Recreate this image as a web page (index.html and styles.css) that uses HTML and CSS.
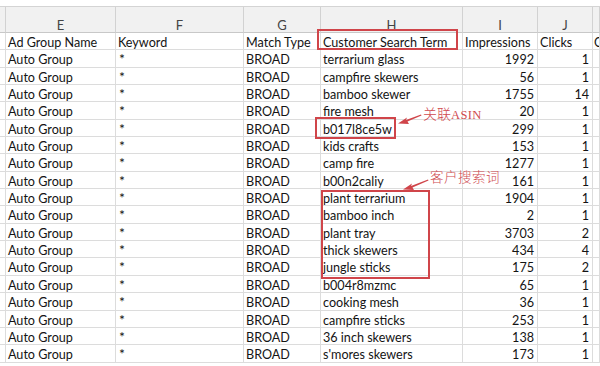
FILE: index.html
```html
<!DOCTYPE html>
<html>
<head>
<meta charset="utf-8">
<link rel="stylesheet" href="styles.css">
</head>
<body>
<div class="sheet">
  <div class="topgap"></div>
  <div class="row colhdr">
    <div class="c"></div><div class="c ctr">E</div><div class="c ctr">F</div><div class="c ctr">G</div><div class="c ctr">H</div><div class="c ctr">I</div><div class="c ctr">J</div><div class="c"></div>
  </div>
  <div class="row">
    <div class="c"></div><div class="c">Ad Group Name</div><div class="c">Keyword</div><div class="c">Match Type</div><div class="c">Customer Search Term</div><div class="c">Impressions</div><div class="c">Clicks</div><div class="c edge">C</div>
  </div>
  <div class="row"><div class="c"></div><div class="c">Auto Group</div><div class="c ast">*</div><div class="c">BROAD</div><div class="c">terrarium glass</div><div class="c num">1992</div><div class="c num">1</div><div class="c"></div></div>
  <div class="row"><div class="c"></div><div class="c">Auto Group</div><div class="c ast">*</div><div class="c">BROAD</div><div class="c">campfire skewers</div><div class="c num">56</div><div class="c num">1</div><div class="c"></div></div>
  <div class="row"><div class="c"></div><div class="c">Auto Group</div><div class="c ast">*</div><div class="c">BROAD</div><div class="c">bamboo skewer</div><div class="c num">1755</div><div class="c num">14</div><div class="c"></div></div>
  <div class="row"><div class="c"></div><div class="c">Auto Group</div><div class="c ast">*</div><div class="c">BROAD</div><div class="c">fire mesh</div><div class="c num">20</div><div class="c num">1</div><div class="c"></div></div>
  <div class="row"><div class="c"></div><div class="c">Auto Group</div><div class="c ast">*</div><div class="c">BROAD</div><div class="c">b017l8ce5w</div><div class="c num">299</div><div class="c num">1</div><div class="c"></div></div>
  <div class="row"><div class="c"></div><div class="c">Auto Group</div><div class="c ast">*</div><div class="c">BROAD</div><div class="c">kids crafts</div><div class="c num">153</div><div class="c num">1</div><div class="c"></div></div>
  <div class="row"><div class="c"></div><div class="c">Auto Group</div><div class="c ast">*</div><div class="c">BROAD</div><div class="c">camp fire</div><div class="c num">1277</div><div class="c num">1</div><div class="c"></div></div>
  <div class="row"><div class="c"></div><div class="c">Auto Group</div><div class="c ast">*</div><div class="c">BROAD</div><div class="c">b00n2caliy</div><div class="c num">161</div><div class="c num">1</div><div class="c"></div></div>
  <div class="row"><div class="c"></div><div class="c">Auto Group</div><div class="c ast">*</div><div class="c">BROAD</div><div class="c">plant terrarium</div><div class="c num">1904</div><div class="c num">1</div><div class="c"></div></div>
  <div class="row"><div class="c"></div><div class="c">Auto Group</div><div class="c ast">*</div><div class="c">BROAD</div><div class="c">bamboo inch</div><div class="c num">2</div><div class="c num">1</div><div class="c"></div></div>
  <div class="row"><div class="c"></div><div class="c">Auto Group</div><div class="c ast">*</div><div class="c">BROAD</div><div class="c">plant tray</div><div class="c num">3703</div><div class="c num">2</div><div class="c"></div></div>
  <div class="row"><div class="c"></div><div class="c">Auto Group</div><div class="c ast">*</div><div class="c">BROAD</div><div class="c">thick skewers</div><div class="c num">434</div><div class="c num">4</div><div class="c"></div></div>
  <div class="row"><div class="c"></div><div class="c">Auto Group</div><div class="c ast">*</div><div class="c">BROAD</div><div class="c">jungle sticks</div><div class="c num">175</div><div class="c num">2</div><div class="c"></div></div>
  <div class="row"><div class="c"></div><div class="c">Auto Group</div><div class="c ast">*</div><div class="c">BROAD</div><div class="c">b004r8mzmc</div><div class="c num">65</div><div class="c num">1</div><div class="c"></div></div>
  <div class="row"><div class="c"></div><div class="c">Auto Group</div><div class="c ast">*</div><div class="c">BROAD</div><div class="c">cooking mesh</div><div class="c num">36</div><div class="c num">1</div><div class="c"></div></div>
  <div class="row"><div class="c"></div><div class="c">Auto Group</div><div class="c ast">*</div><div class="c">BROAD</div><div class="c">campfire sticks</div><div class="c num">253</div><div class="c num">1</div><div class="c"></div></div>
  <div class="row"><div class="c"></div><div class="c">Auto Group</div><div class="c ast">*</div><div class="c">BROAD</div><div class="c">36 inch skewers</div><div class="c num">138</div><div class="c num">1</div><div class="c"></div></div>
  <div class="row"><div class="c"></div><div class="c">Auto Group</div><div class="c ast">*</div><div class="c">BROAD</div><div class="c">s'mores skewers</div><div class="c num">173</div><div class="c num">1</div><div class="c"></div></div>

  <div class="box box-hdr"></div>
  <div class="box box-asin"></div>
  <div class="box box-terms"></div>
  <div class="label label-asin">关联<span class="latin">ASIN</span></div>
  <div class="label label-terms">客户搜索词</div>
  <svg class="arrows" width="600" height="366" viewBox="0 0 600 366">
    <path d="M421 114.5 L406 120 L407 117.5 L398 123.5 L409 124 L407.5 121.5 L421.5 115.5 Z" fill="#d0454a"/>
    <path d="M428 179.5 L411 186 L412 183.5 L403 189.5 L414 190 L412.5 187.5 L428.5 180.5 Z" fill="#d0454a"/>
  </svg>
</div>
</body>
</html>
```

FILE: styles.css
```css
html, body {
  margin: 0;
  padding: 0;
  background: #ffffff;
  overflow: hidden;
}

.sheet {
  position: relative;
  width: 600px;
  height: 366px;
  overflow: hidden;
  font-family: Lato, "Liberation Sans", sans-serif;
  font-size: 12.6px;
  color: #141414;
}

.topgap {
  height: 6px;
  border-bottom: 1px solid #d4d4d4;
}

.row {
  display: grid;
  grid-template-columns: 6px 110px 128px 77px 142px 75px 55px 7px;
  height: 17.35px;
  box-sizing: border-box;
}

.c {
  box-sizing: border-box;
  border-right: 1px solid #dcdcdc;
  border-bottom: 1px solid #dcdcdc;
  padding-left: 2px;
  padding-top: 2px;
  line-height: 15px;
  white-space: nowrap;
  overflow: hidden;
}

.edge {
  padding-left: 1px;
}

.colhdr {
  height: 26px;
  background: #f1f1f1;
}

.colhdr .c {
  border-right: 1px solid #d2d2d2;
  border-bottom: 1px solid #c8c8c8;
  padding-top: 0;
  line-height: 36px;
  color: #444;
  font-size: 13px;
}

.ctr {
  text-align: center;
  padding-left: 0;
}

.num {
  text-align: right;
  padding-right: 3px;
}

.ast {
  padding-left: 3px;
  padding-top: 1px;
  font-size: 14px;
}

.box {
  position: absolute;
  border: 2px solid #d0454a;
  box-sizing: border-box;
}

.box-hdr {
  left: 317px;
  top: 29px;
  width: 141px;
  height: 21px;
}

.box-asin {
  left: 315px;
  top: 117px;
  width: 81px;
  height: 22px;
}

.box-terms {
  left: 321px;
  top: 190px;
  width: 109px;
  height: 89px;
}

.label {
  position: absolute;
  color: #cf4a4f;
  white-space: nowrap;
}

.label-asin {
  left: 423px;
  top: 103px;
  font-family: "Noto Sans CJK SC", sans-serif;
  font-size: 14px;
  font-weight: 300;
}

.label-asin .latin {
  font-family: "Liberation Serif", serif;
  font-size: 12.5px;
  letter-spacing: 0.4px;
}

.label-terms {
  left: 430px;
  top: 166px;
  font-family: "Noto Sans CJK SC", sans-serif;
  font-size: 13.5px;
  font-weight: 300;
  letter-spacing: 0.5px;
}

.arrows {
  position: absolute;
  left: 0;
  top: 0;
}
```
